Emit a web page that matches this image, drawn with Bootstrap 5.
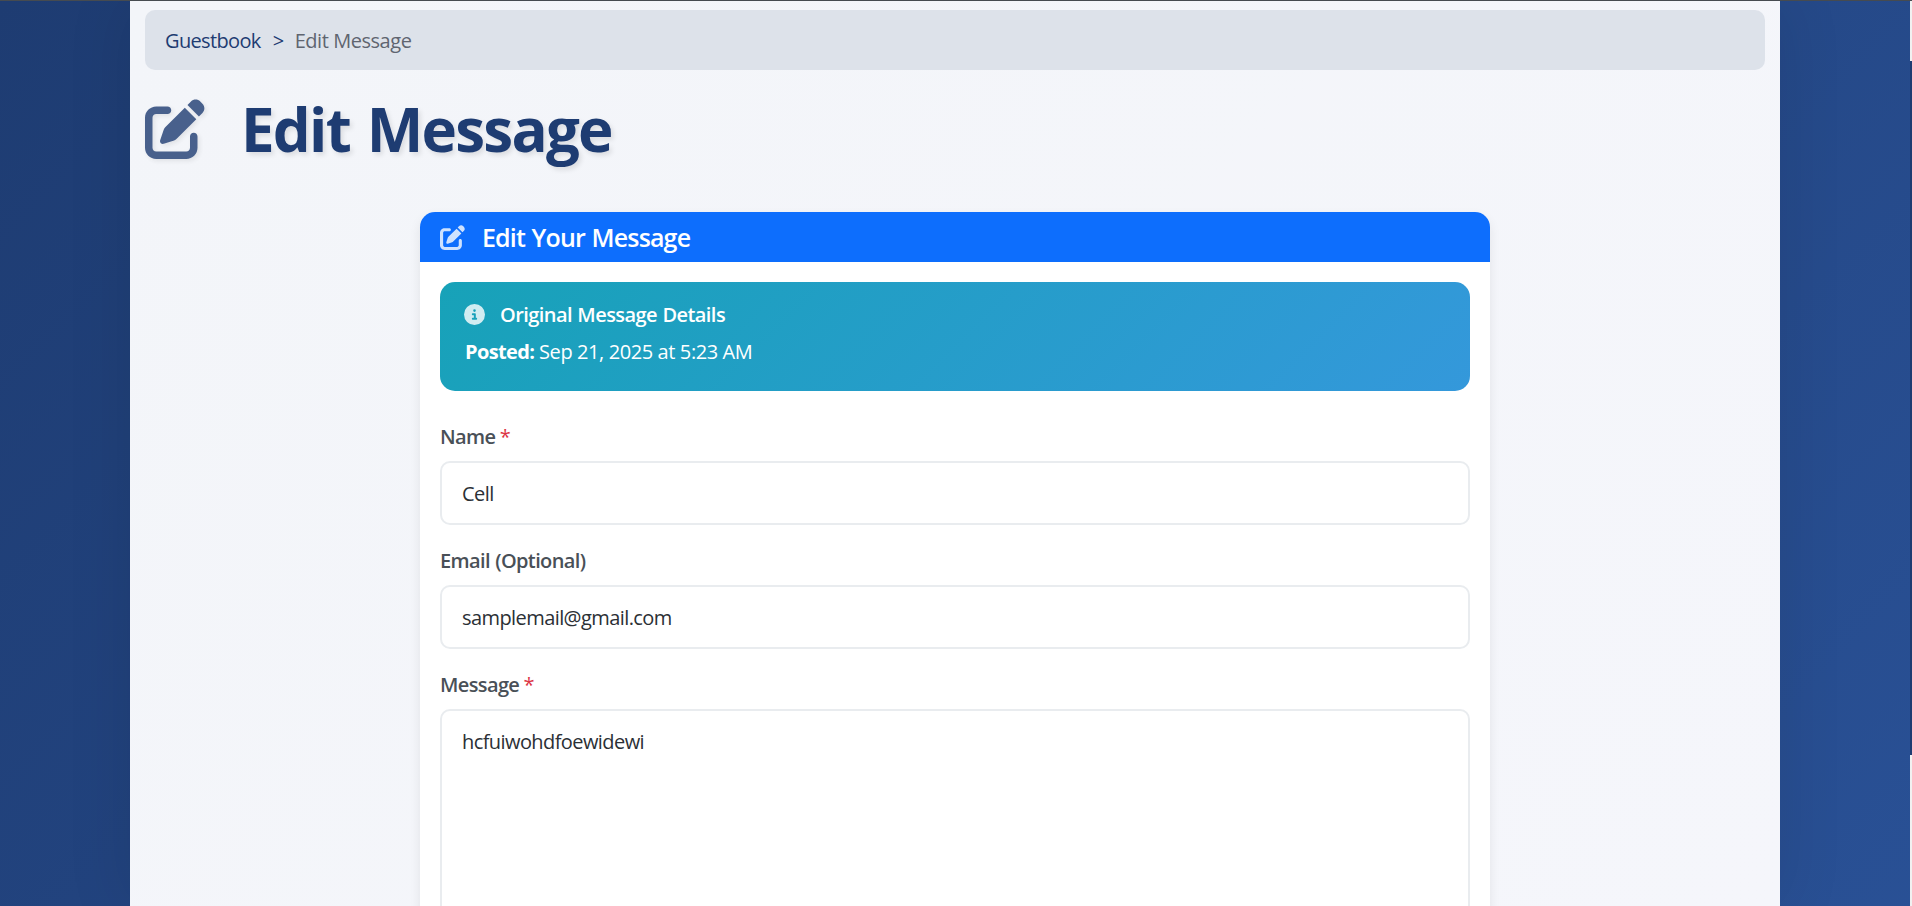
<!DOCTYPE html>
<html lang="en">
<head>
<meta charset="utf-8">
<meta name="viewport" content="width=device-width, initial-scale=1">
<title>Edit Message</title>
<link href="https://cdn.jsdelivr.net/npm/bootstrap@5.3.0/dist/css/bootstrap.min.css" rel="stylesheet">
<style>
html { overflow: hidden; }
body { font-family: "Segoe UI", "Open Sans", "Noto Sans", sans-serif; font-size: 20px; line-height: 30px; height: 100vh; overflow: hidden; color: #212529; padding-right: 2px;
  background: linear-gradient(135deg, #1e3c72 0%, #2a5298 100%) 0 0 / 100% 1150px no-repeat; border-top: 1px solid #464b50; }
.page-wrap { width: 1650px; max-width: none; height: 905px; overflow: hidden; padding: 9px 15px 0; background: linear-gradient(135deg, #f3f5f9, #f5f6fb); box-shadow: 0 0 62px rgba(0,0,0,.1); }
.crumbs { height: 60px; padding: 2px 20px 0; border-radius: 10px; background: #dde2ea; color: #1e3c72; letter-spacing: -.45px; }
.crumbs a { color: #1e3c72; text-decoration: none; letter-spacing: -.65px; }
.crumbs .here { color: #5f6570; margin-left: -1px; }
.page-title { margin: 23px 0 0; height: 72px; font-size: 60px; line-height: 72px; font-weight: 700; color: #1e3c72; letter-spacing: -1.75px; word-spacing: 3px; text-shadow: 2.5px 2.5px 5px rgba(0,0,0,.1); }
.page-title svg { width: 60px; height: 60px; margin: -1px 36px 0 0; opacity: .8; filter: drop-shadow(2.5px 2.5px 2.5px rgba(0,0,0,.1)); }
.edit-card { width: 1070px; height: 1000px; margin: 47px auto 0; border: 0; border-radius: 15px; box-shadow: 0 5px 12px rgba(0,0,0,.08); }
.edit-card .card-header { height: 50px; padding: 0 20px; border: 0; border-radius: 15px 15px 0 0; font-size: 25px; font-weight: 600; letter-spacing: -.85px; word-spacing: 1px; background: #0d6efd; }
.card-header svg { width: 25px; height: 25px; margin-right: 17px; opacity: .8; }
.edit-card .card-body { padding: 20px; }
.details { height: 109px; border-radius: 15px; padding: 18px 25px 0; color: #fff; background: linear-gradient(135deg, #17a2b8, #3498db); letter-spacing: -.4px; }
.details svg { width: 21px; height: 21px; margin: -2px 15px 0 -1px; opacity: .8; }
.details .heading { font-weight: 600; height: 30px; letter-spacing: -.56px; word-spacing: .7px; }
.details .posted { margin-top: 7px; }
.details strong { letter-spacing: -.65px; }
.details-form { margin-top: 31px; }
.field-label { display: block; font-weight: 600; color: #495057; letter-spacing: -.63px; word-spacing: .8px; height: 30px; margin-bottom: 9px; }
.field-label span { color: #dc3545; font-weight: 400; margin-left: -1px; }
.form-control.field { height: 64px; padding: 15px 20px; border: 2px solid #e9ecef; border-radius: 10px; font-size: 20px; line-height: 30px; color: #2b3035; letter-spacing: -.58px; margin-bottom: 21px; }
.form-control.area { height: 300px; resize: none; padding-top: 16px; }
.scroll-rail { position: absolute; right: 0; top: 1px; width: 2px; height: 905px; background: #f1f1f1; }
.scroll-rail div { height: 694px; margin-top: 60px; background: #1e3c72; }
</style>
</head>
<body>
<svg class="d-none">
  <symbol id="pen" viewBox="0 0 512 512"><path fill="currentColor" d="M471.6 21.7c-21.9-21.9-57.3-21.9-79.2 0L362.3 51.7l97.9 97.9 30.1-30.1c21.9-21.9 21.9-57.3 0-79.2L471.6 21.7zm-299.2 220c-6.1 6.1-10.8 13.6-13.5 21.9l-29.6 88.8c-2.9 8.6-.6 18.1 5.8 24.6s15.9 8.7 24.6 5.8l88.8-29.6c8.2-2.7 15.7-7.4 21.9-13.5L437.7 172.3 339.7 74.3 172.4 241.7zM96 64C43 64 0 107 0 160V416c0 53 43 96 96 96H352c53 0 96-43 96-96V320c0-17.7-14.3-32-32-32s-32 14.3-32 32v96c0 17.7-14.3 32-32 32H96c-17.7 0-32-14.3-32-32V160c0-17.7 14.3-32 32-32h96c17.7 0 32-14.3 32-32s-14.3-32-32-32H96z"/></symbol>
  <symbol id="info" viewBox="0 0 512 512"><path fill="currentColor" d="M256 512A256 256 0 1 0 256 0a256 256 0 1 0 0 512zM216 336h24V272H216c-13.3 0-24-10.7-24-24s10.7-24 24-24h48c13.3 0 24 10.7 24 24v88h8c13.3 0 24 10.7 24 24s-10.7 24-24 24H216c-13.3 0-24-10.7-24-24s10.7-24 24-24zm40-208a32 32 0 1 1 0 64 32 32 0 1 1 0-64z"/></symbol>
</svg>
<main class="container page-wrap">
  <nav class="crumbs d-flex align-items-center">
    <a href="#">Guestbook</a><span class="mx-2 px-1">&gt;</span><span class="here">Edit Message</span>
  </nav>
  <h1 class="page-title d-flex align-items-center"><svg><use href="#pen"/></svg><span>Edit Message</span></h1>
  <div class="card edit-card">
    <div class="card-header d-flex align-items-center text-white"><svg><use href="#pen"/></svg><span>Edit Your Message</span></div>
    <div class="card-body">
      <div class="details">
        <div class="heading d-flex align-items-center"><svg><use href="#info"/></svg><span>Original Message Details</span></div>
        <div class="posted"><strong>Posted:</strong> <span>Sep 21, 2025 at 5:23 AM</span></div>
      </div>
      <form class="details-form">
        <label class="field-label" for="name">Name <span>*</span></label>
        <input class="form-control field" id="name" type="text" value="Cell">
        <label class="field-label" for="email">Email (Optional)</label>
        <input class="form-control field" id="email" type="text" value="samplemail@gmail.com">
        <label class="field-label" for="message">Message <span>*</span></label>
        <textarea class="form-control field area" id="message" spellcheck="false">hcfuiwohdfoewidewi</textarea>
      </form>
    </div>
  </div>
</main>
<div class="scroll-rail overflow-hidden"><div></div></div>
<script src="https://cdn.jsdelivr.net/npm/bootstrap@5.3.0/dist/js/bootstrap.bundle.min.js"></script>
</body>
</html>
